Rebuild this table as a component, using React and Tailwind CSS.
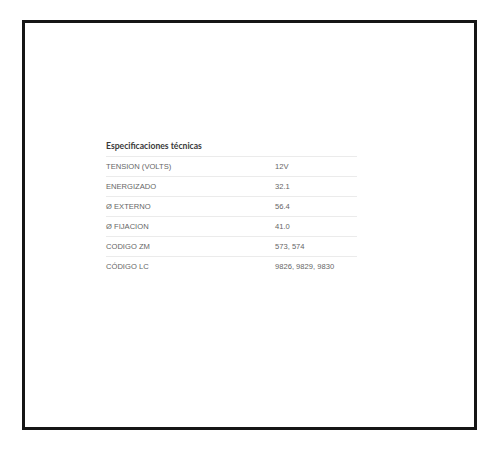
export default function App() {
  const rows = [
    ['TENSION (VOLTS)', '12V'],
    ['ENERGIZADO', '32.1'],
    ['Ø EXTERNO', '56.4'],
    ['Ø FIJACION', '41.0'],
    ['CODIGO ZM', '573, 574'],
    ['CÓDIGO LC', '9826, 9829, 9830'],
  ];

  return (
    <div className="h-[451px] w-[500px] bg-white pl-[22px] pt-[20px]">
      <div className="h-[410px] w-[455px] border-[3px] border-[#161616] pl-[81px] pt-[114px]">
        <div className="w-[251px] font-['Liberation_Sans',Arial,sans-serif]">
          <h2 className="h-[20px] border-b border-[#ebebeb] text-[8.6px] font-bold leading-[19px] text-[#3a3a3a] font-['Lato',sans-serif]">
            Especificaciones técnicas
          </h2>
          {rows.map(([label, value], i) => (
            <div
              key={label}
              className={`flex h-[20px] items-center text-[7.6px] text-[#666] ${i < rows.length - 1 ? 'border-b border-[#ebebeb]' : ''}`}
            >
              <span className="w-[169px]">{label}</span>
              <span>{value}</span>
            </div>
          ))}
        </div>
      </div>
    </div>
  );
}
